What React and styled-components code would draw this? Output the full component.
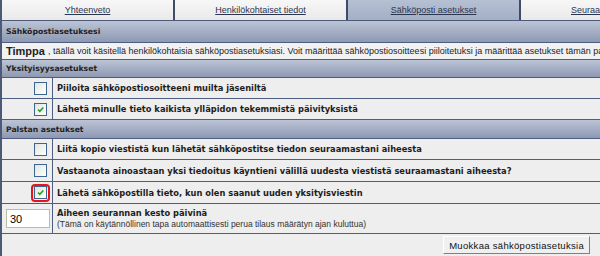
import React from "react";
import styled, { createGlobalStyle } from "styled-components";

const GlobalStyle = createGlobalStyle`
  body {
    margin: 0;
    background: #ffffff;
    font-family: "Liberation Sans", Arial, sans-serif;
  }
`;

const Page = styled.div`
  width: 600px;
  height: 256px;
  overflow: hidden;
  font-size: 9px;
  color: #222;
`;

const Tabs = styled.div`
  display: flex;
  height: 20px;
  border-left: 2px solid #4c5a78;
  border-bottom: 1px solid #4c5a78;
  width: 720px;
`;

const Tab = styled.a`
  flex: 0 0 171px;
  display: flex;
  align-items: center;
  justify-content: center;
  border-right: 2px solid #3e4c6a;
  background: ${(p) =>
    p.active
      ? "linear-gradient(#b6c0d3, #a3afc6)"
      : "linear-gradient(#f7f7f7, #e9e9e9)"};
  color: #2c3550;
  text-decoration: underline;
  cursor: pointer;
`;

const Table = styled.div`
  width: 598px;
  border-left: 2px solid #4c5a78;
  display: flex;
  flex-direction: column;
`;

const Header = styled.div`
  height: ${(p) => p.h}px;
  display: flex;
  align-items: center;
  padding-left: 4px;
  background: linear-gradient(#bcc5d6, #8d98b2);
  border-bottom: 1px solid #4e5e80;
  font-family: "DejaVu Sans", Verdana, sans-serif;
  font-weight: bold;
  font-size: 7.7px;
  color: #222;
`;

const Intro = styled.div`
  height: 16px;
  display: flex;
  align-items: center;
  padding-left: 4px;
  background: #f2f2f2;
  border-bottom: 1px solid #4e5e80;
  white-space: nowrap;
  font-size: 9px;
`;

const Name = styled.b`
  font-size: 11px;
  margin-right: 3px;
`;

const Row = styled.div`
  display: grid;
  grid-template-columns: 51px 1fr;
  height: ${(p) => p.h}px;
  background: #eeeeee;
  border-bottom: 1px solid #4e5e80;
`;

const Cell = styled.div`
  display: flex;
  flex-direction: ${(p) => (p.stack ? "column" : "row")};
  align-items: ${(p) => (p.stack ? "flex-start" : "center")};
  justify-content: ${(p) => (p.right ? "flex-end" : p.stack ? "center" : "flex-start")};
  padding: ${(p) => (p.right ? "0 5px 0 0" : p.input ? "0" : "0 0 0 4px")};
  border-right: ${(p) => (p.right || p.input ? "1px solid #4e5e80" : "none")};
  white-space: nowrap;
`;

const Label = styled.div`
  font-family: "DejaVu Sans", Verdana, sans-serif;
  font-weight: bold;
  font-size: 8.3px;
  color: #1d1d1d;
`;

const Note = styled.div`
  font-size: 8.5px;
  color: #333;
  margin-top: 1px;
`;

const Box = styled.span`
  position: relative;
  width: 11px;
  height: 11px;
  border: 1px solid #3a6690;
  background: linear-gradient(135deg, #e4e4df, #ffffff);
  display: inline-block;
`;

const Ring = styled.span`
  position: absolute;
  left: -4px;
  top: -3px;
  width: 15px;
  height: 14px;
  border: 2px solid #e8141c;
  border-radius: 4px;
`;

const NumInput = styled.input`
  width: 44px;
  height: 19px;
  box-sizing: border-box;
  border: 1px solid #b3bfa6;
  background: #fff;
  font-family: "Liberation Sans", Arial, sans-serif;
  font-size: 11px;
  padding: 0 3px;
  margin-left: 4px;
`;

const Footer = styled.div`
  height: 22px;
  display: flex;
  align-items: center;
  justify-content: flex-end;
  padding-right: 10px;
  background: #eeeeee;
  border-bottom: 1px solid #4e5e80;
`;

const Button = styled.button`
  height: 18px;
  padding: 0 5px;
  background: #f0f0f0;
  border: 1px solid;
  border-color: #ffffff #808080 #808080 #ffffff;
  font-family: "Liberation Sans", Arial, sans-serif;
  font-size: 9.5px;
  letter-spacing: 0.3px;
  color: #111;
`;

const Check = ({ checked, ringed }) => (
  <Box>
    {checked && (
      <svg width="11" height="11" viewBox="0 0 11 11" style={{ position: "absolute", left: 0, top: 0 }}>
        <path d="M3 5.5 L4.8 7.3 L8.3 3.5" stroke="#21a121" strokeWidth="1.6" fill="none" />
      </svg>
    )}
    {ringed && <Ring />}
  </Box>
);

const tabs = ["Yhteenveto", "Henkilökohtaiset tiedot", "Sähköposti asetukset", "Seuraamat aiheet"];

export default function App() {
  return (
    <Page>
      <GlobalStyle />
      <Tabs>
        {tabs.map((t, i) => (
          <Tab key={t} active={i === 2}>
            {t}
          </Tab>
        ))}
      </Tabs>
      <Table>
        <Header h={21}>Sähköpostiasetuksesi</Header>
        <Intro>
          <Name>Timppa</Name>, täällä voit käsitellä henkilökohtaisia sähköpostiasetuksiasi. Voit määrittää
          sähköpostiosoitteesi piiloitetuksi ja määrittää asetukset tämän palstan kautta.
        </Intro>
        <Header h={17}>Yksityisyysasetukset</Header>
        <Row h={20}>
          <Cell right><Check /></Cell>
          <Cell><Label>Piiloita sähköpostiosoitteeni muilta jäseniltä</Label></Cell>
        </Row>
        <Row h={20}>
          <Cell right><Check checked /></Cell>
          <Cell><Label>Lähetä minulle tieto kaikista ylläpidon tekemmistä päivityksistä</Label></Cell>
        </Row>
        <Header h={18}>Palstan asetukset</Header>
        <Row h={20}>
          <Cell right><Check /></Cell>
          <Cell><Label>Liitä kopio viestistä kun lähetät sähköpostitse tiedon seuraamastani aiheesta</Label></Cell>
        </Row>
        <Row h={21}>
          <Cell right><Check /></Cell>
          <Cell><Label>Vastaanota ainoastaan yksi tiedoitus käyntieni välillä uudesta viestistä seuraamastani aiheesta?</Label></Cell>
        </Row>
        <Row h={21}>
          <Cell right><Check checked ringed /></Cell>
          <Cell><Label>Lähetä sähköpostilla tieto, kun olen saanut uuden yksityisviestin</Label></Cell>
        </Row>
        <Row h={29}>
          <Cell input>
            <NumInput defaultValue="30" />
          </Cell>
          <Cell stack>
            <Label>Aiheen seurannan kesto päivinä</Label>
            <Note>(Tämä on käytännöllinen tapa automaattisesti perua tilaus määrätyn ajan kuluttua)</Note>
          </Cell>
        </Row>
        <Footer>
          <Button>Muokkaa sähköpostiasetuksia</Button>
        </Footer>
      </Table>
    </Page>
  );
}
